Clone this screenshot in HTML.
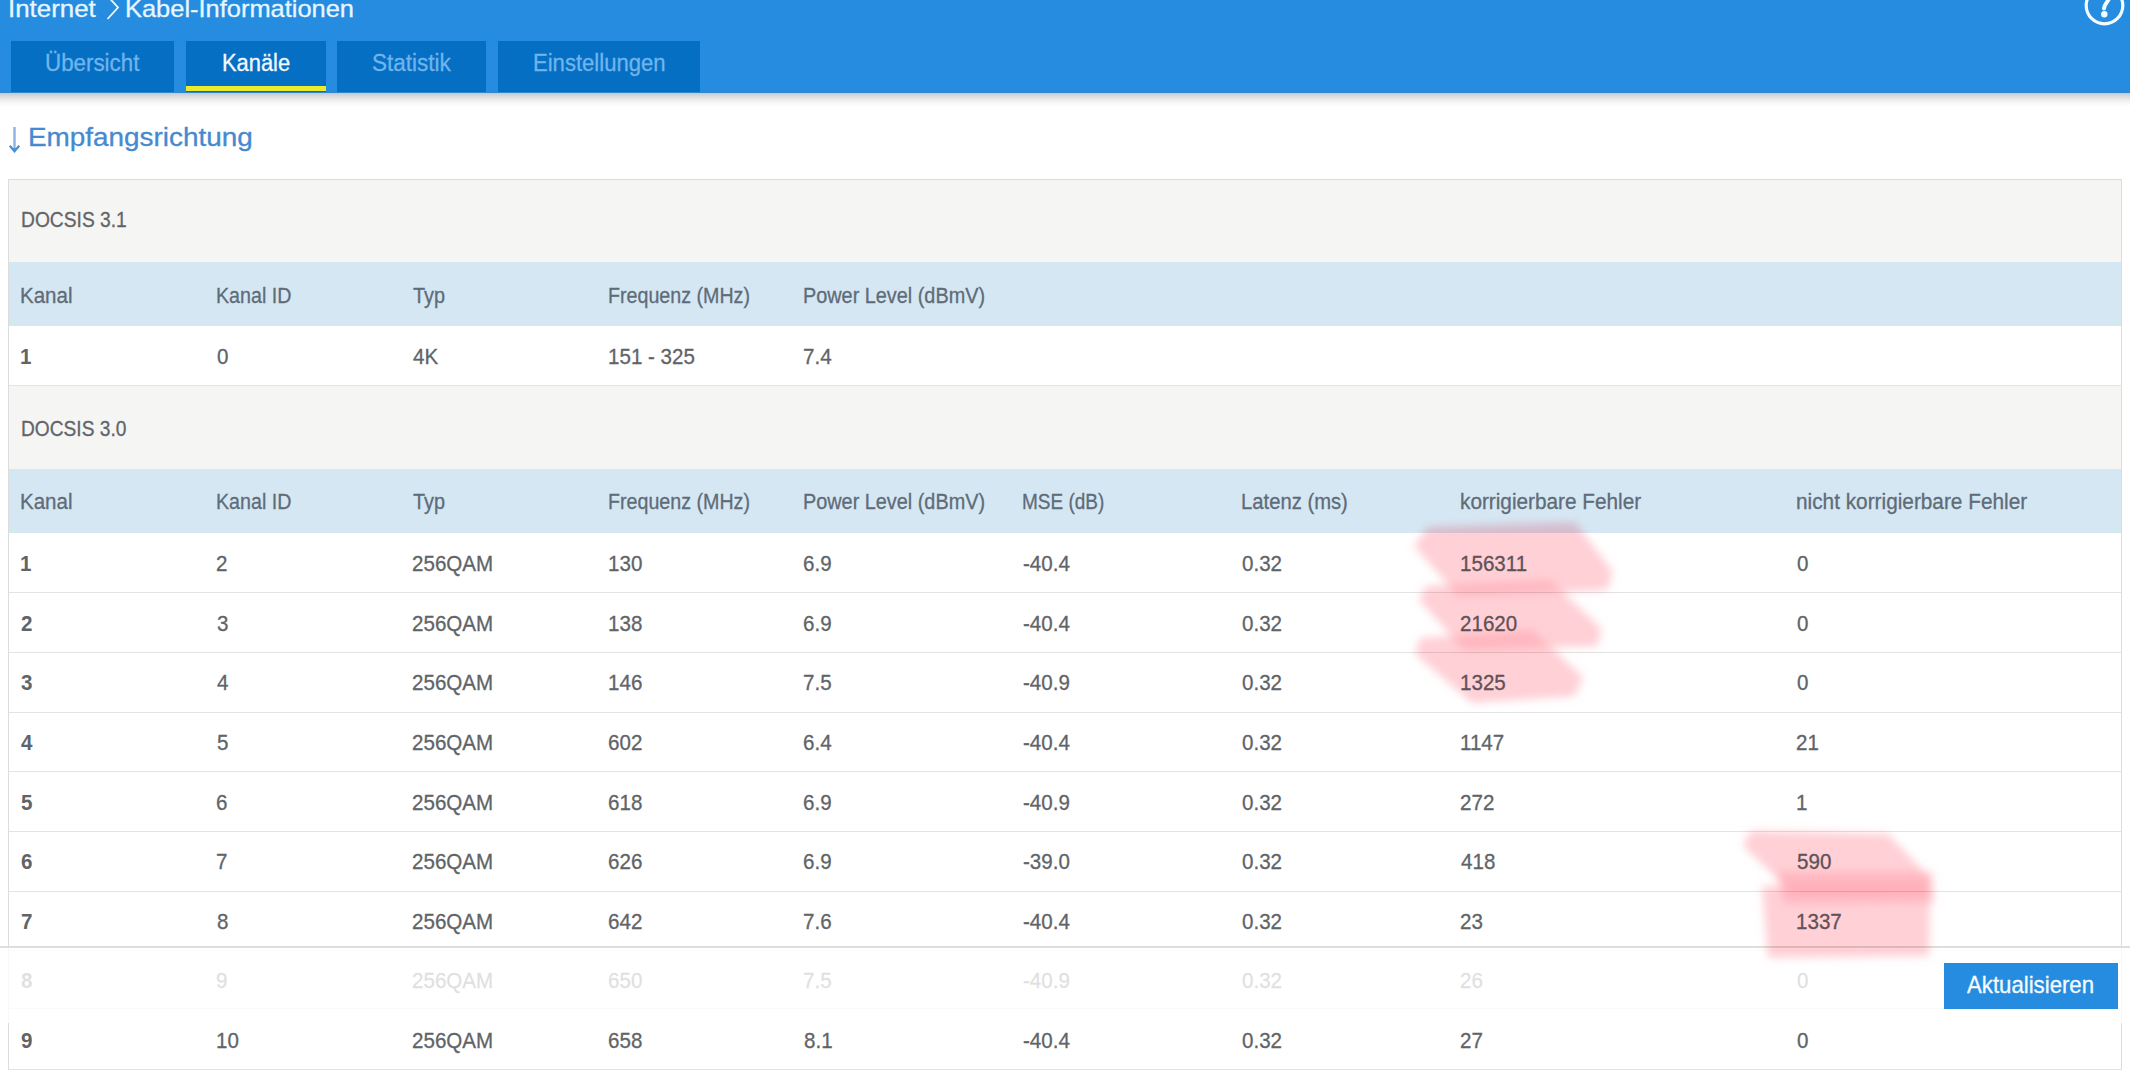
<!DOCTYPE html>
<html><head><meta charset="utf-8">
<style>
html,body{margin:0;padding:0;}
body{width:2130px;height:1070px;overflow:hidden;position:relative;background:#fff;font-family:"Liberation Sans",sans-serif;}
.t{position:absolute;white-space:nowrap;transform-origin:0 0;display:block;-webkit-text-stroke:0.3px currentColor;}
.abs{position:absolute;}
#hdr{left:0;top:0;width:2130px;height:93px;background:#268ce0;}
#hdrline{left:0;top:92px;width:2130px;height:1px;background:#2f86cf;}
.tab{position:absolute;top:41px;height:51px;background:#056fc4;}
#yl{left:186px;top:86px;width:140px;height:5px;background:#ecea2c;}
#shadow{left:0;top:93px;width:2130px;height:14px;background:linear-gradient(#b9cde0 0px,#d6d6d6 2.5px,#e3e3e3 5px,#f1f1f1 8px,#fafafa 11px,#fff 14px);}
#tbl{left:8px;top:179px;width:2112px;height:900px;border:1px solid #dcdcdc;}
.docsis{position:absolute;left:9px;width:2112px;background:#f5f5f4;}
.thd{position:absolute;left:9px;width:2112px;background:#d6e7f4;}
.rb{position:absolute;left:9px;width:2112px;height:1px;background:#e3e3e3;}
#footer{left:0;top:946px;width:2130px;height:75px;background:rgba(255,255,255,0.8);border-top:2px solid #dedede;z-index:5;-webkit-backdrop-filter:blur(0.6px);backdrop-filter:blur(0.6px);}
#btn{left:1944px;top:963px;width:174px;height:46px;background:#268ce0;z-index:6;}
#blobs{left:0;top:0;z-index:10;mix-blend-mode:multiply;pointer-events:none;}
</style></head><body>
<div id="hdr" class="abs"></div>
<div id="hdrline" class="abs"></div>
<div class="tab" style="left:11px;width:163px;"></div>
<div class="tab" style="left:186px;width:140px;"></div>
<div class="tab" style="left:337px;width:149px;"></div>
<div class="tab" style="left:498px;width:202px;"></div>
<div id="yl" class="abs"></div>
<div id="shadow" class="abs"></div>
<svg class="abs" style="left:0;top:0;" width="130" height="30"><polyline points="107.5,-4 118,7.5 107.5,19" fill="none" stroke="#eef8ff" stroke-width="1.8"/></svg>
<svg class="abs" style="left:2070px;top:0;" width="60" height="32">
 <circle cx="34.5" cy="5.5" r="18.3" fill="none" stroke="#f3fbff" stroke-width="3.2"/>
 <path d="M39.5,-3 C38.5,2 34,4 34,8.5" fill="none" stroke="#f3fbff" stroke-width="4" stroke-linecap="round"/>
 <circle cx="34.3" cy="14.3" r="3.2" fill="#f3fbff"/>
</svg>
<svg class="abs" style="left:0;top:120px;" width="30" height="40"><path d="M14.5,7 V30" stroke="#8db4dc" stroke-width="2.4" fill="none"/><path d="M9.8,25.8 L14.5,31.4 L19.2,25.8" fill="none" stroke="#4b8dd3" stroke-width="2.2" stroke-linejoin="miter"/><path d="M11.8,28.2 L14.5,32.3 L17.2,28.2 Z" fill="#4b8dd3"/></svg>
<div id="tbl" class="abs"></div>
<div class="docsis" style="top:180px;height:82px;"></div>
<div class="thd" style="top:262px;height:64px;"></div>
<div class="rb" style="top:385px;"></div>
<div class="docsis" style="top:386px;height:83px;"></div>
<div class="thd" style="top:469px;height:64px;"></div>
<div class="rb" style="top:592px;"></div>
<div class="rb" style="top:652px;"></div>
<div class="rb" style="top:712px;"></div>
<div class="rb" style="top:771px;"></div>
<div class="rb" style="top:831px;"></div>
<div class="rb" style="top:891px;"></div>
<div class="rb" style="top:950px;"></div>
<div class="rb" style="top:1008px;"></div>
<div class="rb" style="top:1069px;"></div>
<span class="t" style="left:8.24px;top:-3.22px;font-size:24px;line-height:24px;color:#e8f6ff;transform:scaleX(1.0788);">Internet</span>
<span class="t" style="left:124.84px;top:-3.22px;font-size:24px;line-height:24px;color:#e8f6ff;transform:scaleX(1.0595);">Kabel-Informationen</span>
<span class="t" style="left:45.03px;top:51.63px;font-size:23px;line-height:23px;color:#6fb5ec;transform:scaleX(0.9715);">Übersicht</span>
<span class="t" style="left:222.35px;top:51.63px;font-size:23px;line-height:23px;color:#f2f9ff;transform:scaleX(0.9509);">Kanäle</span>
<span class="t" style="left:371.92px;top:51.63px;font-size:23px;line-height:23px;color:#6fb5ec;transform:scaleX(0.9797);">Statistik</span>
<span class="t" style="left:532.54px;top:51.63px;font-size:23px;line-height:23px;color:#6fb5ec;transform:scaleX(0.9596);">Einstellungen</span>
<span class="t" style="left:27.50px;top:123.68px;font-size:26.6px;line-height:26.6px;color:#4689d0;transform:scaleX(1.0484);">Empfangsrichtung</span>
<span class="t" style="left:20.91px;top:209.02px;font-size:21.6px;line-height:21.6px;color:#626568;transform:scaleX(0.8904);">DOCSIS 3.1</span>
<span class="t" style="left:20.05px;top:284.72px;font-size:21.6px;line-height:21.6px;color:#5e6c78;transform:scaleX(0.9508);">Kanal</span>
<span class="t" style="left:215.89px;top:284.72px;font-size:21.6px;line-height:21.6px;color:#5e6c78;transform:scaleX(0.9110);">Kanal ID</span>
<span class="t" style="left:412.60px;top:284.72px;font-size:21.6px;line-height:21.6px;color:#5e6c78;transform:scaleX(0.9197);">Typ</span>
<span class="t" style="left:607.69px;top:284.72px;font-size:21.6px;line-height:21.6px;color:#5e6c78;transform:scaleX(0.9103);">Frequenz (MHz)</span>
<span class="t" style="left:803.28px;top:284.72px;font-size:21.6px;line-height:21.6px;color:#5e6c78;transform:scaleX(0.9192);">Power Level (dBmV)</span>
<span class="t" style="left:20.07px;top:345.58px;font-size:22px;line-height:22px;color:#606468;font-weight:bold;transform:scaleX(0.9350);-webkit-text-stroke:0;">1</span>
<span class="t" style="left:216.80px;top:345.58px;font-size:22px;line-height:22px;color:#606468;transform:scaleX(0.9350);">0</span>
<span class="t" style="left:412.60px;top:345.58px;font-size:22px;line-height:22px;color:#606468;transform:scaleX(0.9350);">4K</span>
<span class="t" style="left:607.67px;top:345.58px;font-size:22px;line-height:22px;color:#606468;transform:scaleX(0.9350);">151 - 325</span>
<span class="t" style="left:803.27px;top:345.58px;font-size:22px;line-height:22px;color:#606468;transform:scaleX(0.9350);">7.4</span>
<span class="t" style="left:20.91px;top:417.52px;font-size:21.6px;line-height:21.6px;color:#626568;transform:scaleX(0.8871);">DOCSIS 3.0</span>
<span class="t" style="left:20.05px;top:491.02px;font-size:21.6px;line-height:21.6px;color:#5e6c78;transform:scaleX(0.9508);">Kanal</span>
<span class="t" style="left:215.89px;top:491.02px;font-size:21.6px;line-height:21.6px;color:#5e6c78;transform:scaleX(0.9110);">Kanal ID</span>
<span class="t" style="left:412.60px;top:491.02px;font-size:21.6px;line-height:21.6px;color:#5e6c78;transform:scaleX(0.9197);">Typ</span>
<span class="t" style="left:607.69px;top:491.02px;font-size:21.6px;line-height:21.6px;color:#5e6c78;transform:scaleX(0.9103);">Frequenz (MHz)</span>
<span class="t" style="left:803.28px;top:491.02px;font-size:21.6px;line-height:21.6px;color:#5e6c78;transform:scaleX(0.9192);">Power Level (dBmV)</span>
<span class="t" style="left:1022.32px;top:491.02px;font-size:21.6px;line-height:21.6px;color:#5e6c78;transform:scaleX(0.8797);">MSE (dB)</span>
<span class="t" style="left:1241.46px;top:491.02px;font-size:21.6px;line-height:21.6px;color:#5e6c78;transform:scaleX(0.9373);">Latenz (ms)</span>
<span class="t" style="left:1460.24px;top:491.02px;font-size:21.6px;line-height:21.6px;color:#5e6c78;transform:scaleX(0.9614);">korrigierbare Fehler</span>
<span class="t" style="left:1796.44px;top:491.02px;font-size:21.6px;line-height:21.6px;color:#5e6c78;transform:scaleX(0.9630);">nicht korrigierbare Fehler</span>
<span class="t" style="left:20.07px;top:552.98px;font-size:22px;line-height:22px;color:#606468;font-weight:bold;transform:scaleX(0.9350);-webkit-text-stroke:0;">1</span>
<span class="t" style="left:215.87px;top:552.98px;font-size:22px;line-height:22px;color:#606468;transform:scaleX(0.9350);">2</span>
<span class="t" style="left:411.67px;top:552.98px;font-size:22px;line-height:22px;color:#606468;transform:scaleX(0.9350);">256QAM</span>
<span class="t" style="left:607.67px;top:552.98px;font-size:22px;line-height:22px;color:#606468;transform:scaleX(0.9350);">130</span>
<span class="t" style="left:803.27px;top:552.98px;font-size:22px;line-height:22px;color:#606468;transform:scaleX(0.9350);">6.9</span>
<span class="t" style="left:1023.20px;top:552.98px;font-size:22px;line-height:22px;color:#606468;transform:scaleX(0.9350);">-40.4</span>
<span class="t" style="left:1242.40px;top:552.98px;font-size:22px;line-height:22px;color:#606468;transform:scaleX(0.9350);">0.32</span>
<span class="t" style="left:1460.27px;top:552.98px;font-size:22px;line-height:22px;color:#606468;transform:scaleX(0.9350);">156311</span>
<span class="t" style="left:1797.40px;top:552.98px;font-size:22px;line-height:22px;color:#606468;transform:scaleX(0.9350);">0</span>
<span class="t" style="left:21.00px;top:612.63px;font-size:22px;line-height:22px;color:#606468;font-weight:bold;transform:scaleX(0.9350);-webkit-text-stroke:0;">2</span>
<span class="t" style="left:216.80px;top:612.63px;font-size:22px;line-height:22px;color:#606468;transform:scaleX(0.9350);">3</span>
<span class="t" style="left:411.67px;top:612.63px;font-size:22px;line-height:22px;color:#606468;transform:scaleX(0.9350);">256QAM</span>
<span class="t" style="left:607.67px;top:612.63px;font-size:22px;line-height:22px;color:#606468;transform:scaleX(0.9350);">138</span>
<span class="t" style="left:803.27px;top:612.63px;font-size:22px;line-height:22px;color:#606468;transform:scaleX(0.9350);">6.9</span>
<span class="t" style="left:1023.20px;top:612.63px;font-size:22px;line-height:22px;color:#606468;transform:scaleX(0.9350);">-40.4</span>
<span class="t" style="left:1242.40px;top:612.63px;font-size:22px;line-height:22px;color:#606468;transform:scaleX(0.9350);">0.32</span>
<span class="t" style="left:1460.27px;top:612.63px;font-size:22px;line-height:22px;color:#606468;transform:scaleX(0.9350);">21620</span>
<span class="t" style="left:1797.40px;top:612.63px;font-size:22px;line-height:22px;color:#606468;transform:scaleX(0.9350);">0</span>
<span class="t" style="left:21.00px;top:672.28px;font-size:22px;line-height:22px;color:#606468;font-weight:bold;transform:scaleX(0.9350);-webkit-text-stroke:0;">3</span>
<span class="t" style="left:216.80px;top:672.28px;font-size:22px;line-height:22px;color:#606468;transform:scaleX(0.9350);">4</span>
<span class="t" style="left:411.67px;top:672.28px;font-size:22px;line-height:22px;color:#606468;transform:scaleX(0.9350);">256QAM</span>
<span class="t" style="left:607.67px;top:672.28px;font-size:22px;line-height:22px;color:#606468;transform:scaleX(0.9350);">146</span>
<span class="t" style="left:803.27px;top:672.28px;font-size:22px;line-height:22px;color:#606468;transform:scaleX(0.9350);">7.5</span>
<span class="t" style="left:1023.20px;top:672.28px;font-size:22px;line-height:22px;color:#606468;transform:scaleX(0.9350);">-40.9</span>
<span class="t" style="left:1242.40px;top:672.28px;font-size:22px;line-height:22px;color:#606468;transform:scaleX(0.9350);">0.32</span>
<span class="t" style="left:1460.27px;top:672.28px;font-size:22px;line-height:22px;color:#606468;transform:scaleX(0.9350);">1325</span>
<span class="t" style="left:1797.40px;top:672.28px;font-size:22px;line-height:22px;color:#606468;transform:scaleX(0.9350);">0</span>
<span class="t" style="left:21.00px;top:731.93px;font-size:22px;line-height:22px;color:#606468;font-weight:bold;transform:scaleX(0.9350);-webkit-text-stroke:0;">4</span>
<span class="t" style="left:216.80px;top:731.93px;font-size:22px;line-height:22px;color:#606468;transform:scaleX(0.9350);">5</span>
<span class="t" style="left:411.67px;top:731.93px;font-size:22px;line-height:22px;color:#606468;transform:scaleX(0.9350);">256QAM</span>
<span class="t" style="left:607.67px;top:731.93px;font-size:22px;line-height:22px;color:#606468;transform:scaleX(0.9350);">602</span>
<span class="t" style="left:803.27px;top:731.93px;font-size:22px;line-height:22px;color:#606468;transform:scaleX(0.9350);">6.4</span>
<span class="t" style="left:1023.20px;top:731.93px;font-size:22px;line-height:22px;color:#606468;transform:scaleX(0.9350);">-40.4</span>
<span class="t" style="left:1242.40px;top:731.93px;font-size:22px;line-height:22px;color:#606468;transform:scaleX(0.9350);">0.32</span>
<span class="t" style="left:1460.27px;top:731.93px;font-size:22px;line-height:22px;color:#606468;transform:scaleX(0.9350);">1147</span>
<span class="t" style="left:1796.47px;top:731.93px;font-size:22px;line-height:22px;color:#606468;transform:scaleX(0.9350);">21</span>
<span class="t" style="left:21.00px;top:791.58px;font-size:22px;line-height:22px;color:#606468;font-weight:bold;transform:scaleX(0.9350);-webkit-text-stroke:0;">5</span>
<span class="t" style="left:215.87px;top:791.58px;font-size:22px;line-height:22px;color:#606468;transform:scaleX(0.9350);">6</span>
<span class="t" style="left:411.67px;top:791.58px;font-size:22px;line-height:22px;color:#606468;transform:scaleX(0.9350);">256QAM</span>
<span class="t" style="left:607.67px;top:791.58px;font-size:22px;line-height:22px;color:#606468;transform:scaleX(0.9350);">618</span>
<span class="t" style="left:803.27px;top:791.58px;font-size:22px;line-height:22px;color:#606468;transform:scaleX(0.9350);">6.9</span>
<span class="t" style="left:1023.20px;top:791.58px;font-size:22px;line-height:22px;color:#606468;transform:scaleX(0.9350);">-40.9</span>
<span class="t" style="left:1242.40px;top:791.58px;font-size:22px;line-height:22px;color:#606468;transform:scaleX(0.9350);">0.32</span>
<span class="t" style="left:1460.27px;top:791.58px;font-size:22px;line-height:22px;color:#606468;transform:scaleX(0.9350);">272</span>
<span class="t" style="left:1796.47px;top:791.58px;font-size:22px;line-height:22px;color:#606468;transform:scaleX(0.9350);">1</span>
<span class="t" style="left:21.00px;top:851.23px;font-size:22px;line-height:22px;color:#606468;font-weight:bold;transform:scaleX(0.9350);-webkit-text-stroke:0;">6</span>
<span class="t" style="left:215.87px;top:851.23px;font-size:22px;line-height:22px;color:#606468;transform:scaleX(0.9350);">7</span>
<span class="t" style="left:411.67px;top:851.23px;font-size:22px;line-height:22px;color:#606468;transform:scaleX(0.9350);">256QAM</span>
<span class="t" style="left:607.67px;top:851.23px;font-size:22px;line-height:22px;color:#606468;transform:scaleX(0.9350);">626</span>
<span class="t" style="left:803.27px;top:851.23px;font-size:22px;line-height:22px;color:#606468;transform:scaleX(0.9350);">6.9</span>
<span class="t" style="left:1023.20px;top:851.23px;font-size:22px;line-height:22px;color:#606468;transform:scaleX(0.9350);">-39.0</span>
<span class="t" style="left:1242.40px;top:851.23px;font-size:22px;line-height:22px;color:#606468;transform:scaleX(0.9350);">0.32</span>
<span class="t" style="left:1461.20px;top:851.23px;font-size:22px;line-height:22px;color:#606468;transform:scaleX(0.9350);">418</span>
<span class="t" style="left:1797.40px;top:851.23px;font-size:22px;line-height:22px;color:#606468;transform:scaleX(0.9350);">590</span>
<span class="t" style="left:21.00px;top:910.88px;font-size:22px;line-height:22px;color:#606468;font-weight:bold;transform:scaleX(0.9350);-webkit-text-stroke:0;">7</span>
<span class="t" style="left:216.80px;top:910.88px;font-size:22px;line-height:22px;color:#606468;transform:scaleX(0.9350);">8</span>
<span class="t" style="left:411.67px;top:910.88px;font-size:22px;line-height:22px;color:#606468;transform:scaleX(0.9350);">256QAM</span>
<span class="t" style="left:607.67px;top:910.88px;font-size:22px;line-height:22px;color:#606468;transform:scaleX(0.9350);">642</span>
<span class="t" style="left:803.27px;top:910.88px;font-size:22px;line-height:22px;color:#606468;transform:scaleX(0.9350);">7.6</span>
<span class="t" style="left:1023.20px;top:910.88px;font-size:22px;line-height:22px;color:#606468;transform:scaleX(0.9350);">-40.4</span>
<span class="t" style="left:1242.40px;top:910.88px;font-size:22px;line-height:22px;color:#606468;transform:scaleX(0.9350);">0.32</span>
<span class="t" style="left:1460.27px;top:910.88px;font-size:22px;line-height:22px;color:#606468;transform:scaleX(0.9350);">23</span>
<span class="t" style="left:1796.47px;top:910.88px;font-size:22px;line-height:22px;color:#606468;transform:scaleX(0.9350);">1337</span>
<span class="t" style="left:21.00px;top:969.53px;font-size:22px;line-height:22px;color:#606468;font-weight:bold;transform:scaleX(0.9350);-webkit-text-stroke:0;">8</span>
<span class="t" style="left:215.87px;top:969.53px;font-size:22px;line-height:22px;color:#606468;transform:scaleX(0.9350);">9</span>
<span class="t" style="left:411.67px;top:969.53px;font-size:22px;line-height:22px;color:#606468;transform:scaleX(0.9350);">256QAM</span>
<span class="t" style="left:607.67px;top:969.53px;font-size:22px;line-height:22px;color:#606468;transform:scaleX(0.9350);">650</span>
<span class="t" style="left:803.27px;top:969.53px;font-size:22px;line-height:22px;color:#606468;transform:scaleX(0.9350);">7.5</span>
<span class="t" style="left:1023.20px;top:969.53px;font-size:22px;line-height:22px;color:#606468;transform:scaleX(0.9350);">-40.9</span>
<span class="t" style="left:1242.40px;top:969.53px;font-size:22px;line-height:22px;color:#606468;transform:scaleX(0.9350);">0.32</span>
<span class="t" style="left:1460.27px;top:969.53px;font-size:22px;line-height:22px;color:#606468;transform:scaleX(0.9350);">26</span>
<span class="t" style="left:1797.40px;top:969.53px;font-size:22px;line-height:22px;color:#606468;transform:scaleX(0.9350);">0</span>
<span class="t" style="left:21.00px;top:1030.18px;font-size:22px;line-height:22px;color:#606468;font-weight:bold;transform:scaleX(0.9350);-webkit-text-stroke:0;">9</span>
<span class="t" style="left:215.87px;top:1030.18px;font-size:22px;line-height:22px;color:#606468;transform:scaleX(0.9350);">10</span>
<span class="t" style="left:411.67px;top:1030.18px;font-size:22px;line-height:22px;color:#606468;transform:scaleX(0.9350);">256QAM</span>
<span class="t" style="left:607.67px;top:1030.18px;font-size:22px;line-height:22px;color:#606468;transform:scaleX(0.9350);">658</span>
<span class="t" style="left:804.20px;top:1030.18px;font-size:22px;line-height:22px;color:#606468;transform:scaleX(0.9350);">8.1</span>
<span class="t" style="left:1023.20px;top:1030.18px;font-size:22px;line-height:22px;color:#606468;transform:scaleX(0.9350);">-40.4</span>
<span class="t" style="left:1242.40px;top:1030.18px;font-size:22px;line-height:22px;color:#606468;transform:scaleX(0.9350);">0.32</span>
<span class="t" style="left:1460.27px;top:1030.18px;font-size:22px;line-height:22px;color:#606468;transform:scaleX(0.9350);">27</span>
<span class="t" style="left:1797.40px;top:1030.18px;font-size:22px;line-height:22px;color:#606468;transform:scaleX(0.9350);">0</span>
<span class="t" style="left:1967.20px;top:973.96px;font-size:23.2px;line-height:23.2px;color:#f5fbff;transform:scaleX(0.9571);z-index:7;">Aktualisieren</span>
<div id="footer" class="abs"></div>
<div id="btn" class="abs"></div>
<svg id="blobs" class="abs" width="2130" height="1070">
 <defs><filter id="bl" x="-20%" y="-50%" width="140%" height="200%"><feGaussianBlur stdDeviation="4.5"/></filter></defs>
 <g filter="url(#bl)" fill="#ff98a5" fill-opacity="0.46">
  <polygon points="1428,527 1575,522 1613,572 1607,590 1458,596 1414,546"/>
  <polygon points="1426,586 1550,580 1601,628 1598,646 1464,650 1419,600"/>
  <polygon points="1420,638 1532,630 1583,677 1575,696 1472,703 1415,654"/>
  <polygon points="1750,831 1888,834 1930,878 1926,892 1792,892 1743,846"/>
  <polygon points="1776,872 1932,872 1934,902 1784,903"/>
  <polygon points="1762,886 1930,886 1929,956 1768,958"/>
 </g>
</svg>
</body></html>
